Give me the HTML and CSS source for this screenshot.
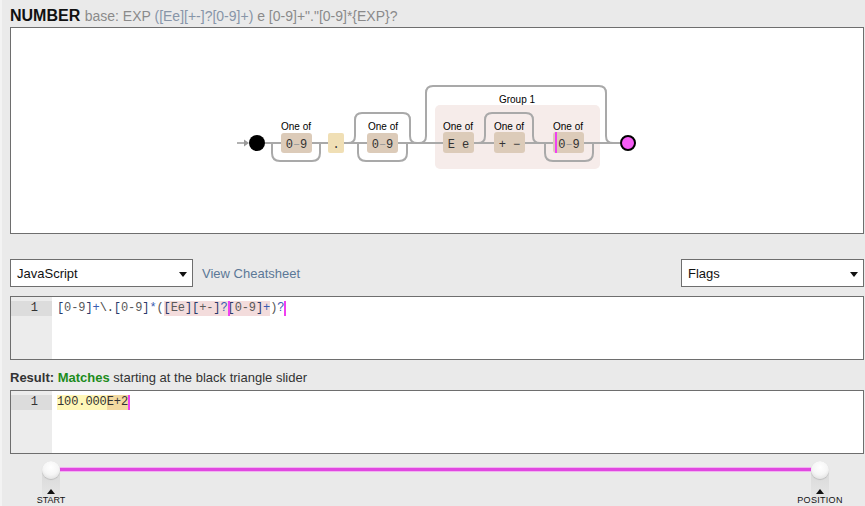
FILE: index.html
```html
<!DOCTYPE html>
<html>
<head>
<meta charset="utf-8">
<link rel="stylesheet" href="styles.css">
</head>
<body>
<div class="page">
  <div class="title"><span class="name">NUMBER</span> <span class="base">base: EXP <span class="grp">([Ee][+-]?[0-9]+)</span> e [0-9]+"."[0-9]*{EXP}?</span></div>

  <div class="diagram">
    <svg width="852" height="205" viewBox="0 0 852 205">
      <g transform="translate(-11,-28)">
        <rect x="435" y="105" width="165" height="64" rx="5" fill="#f6ecea"/>
        <text x="517" y="103" class="lbl" text-anchor="middle">Group 1</text>
        <g fill="none" stroke="#a9a9a9" stroke-width="2">
          <path d="M265,143 H620"/>
          <path d="M272,143 v10 q0 8 8 8 h32 q8 0 8 -8 v-10"/>
          <path d="M358,143 v10 q0 8 8 8 h33 q8 0 8 -8 v-10"/>
          <path d="M545,143 v10 q0 8 8 8 h32 q8 0 8 -8 v-10"/>
          <path d="M348,143 q7 0 7 -7 v-16 q0 -7 7 -7 h41 q7 0 7 7 v16 q0 7 7 7"/>
          <path d="M419,143 q7 0 7 -7 v-43 q0 -7 7 -7 h166 q7 0 7 7 v43 q0 7 7 7"/>
          <path d="M478,143 q7 0 7 -7 v-16 q0 -7 7 -7 h34 q7 0 7 7 v16 q0 7 7 7"/>
        </g>
        <path d="M237,143 H247" stroke="#999" stroke-width="1.5"/>
        <path d="M244,139.5 L249,143 L244,146.5 Z" fill="#999"/>
        <circle cx="257" cy="143" r="8" fill="#000"/>

        <text x="296" y="130" class="lbl" text-anchor="middle">One of</text>
        <rect x="281" y="133" width="31" height="20" rx="3" fill="#dccbb9"/>
        <text x="296.5" y="147.5" class="mono" text-anchor="middle">0<tspan fill="#999">–</tspan>9</text>

        <rect x="328" y="133" width="16" height="20" rx="2" fill="#f0dfb5"/>
        <text x="336" y="147.5" class="mono" text-anchor="middle">.</text>

        <text x="383" y="130" class="lbl" text-anchor="middle">One of</text>
        <rect x="367" y="133" width="31" height="20" rx="3" fill="#dccbb9"/>
        <text x="382.5" y="147.5" class="mono" text-anchor="middle">0<tspan fill="#999">–</tspan>9</text>

        <text x="458" y="130" class="lbl" text-anchor="middle">One of</text>
        <rect x="443" y="132" width="31" height="21" rx="3" fill="#dccbb9"/>
        <text x="458.5" y="147.5" class="mono" text-anchor="middle" xml:space="preserve">E e</text>

        <text x="509" y="130" class="lbl" text-anchor="middle">One of</text>
        <rect x="494" y="132" width="31" height="21" rx="3" fill="#dccbb9"/>
        <text x="509.5" y="147.5" class="mono" text-anchor="middle" xml:space="preserve">+ −</text>

        <text x="568" y="130" class="lbl" text-anchor="middle">One of</text>
        <rect x="553" y="132" width="31" height="21" rx="3" fill="#dccbb9"/>
        <rect x="555" y="132" width="2" height="21" fill="#f040f0"/>
        <text x="569" y="147.5" class="mono" text-anchor="middle">0<tspan fill="#999">–</tspan>9</text>

        <circle cx="628" cy="143" r="7" fill="#f45cf4" stroke="#000" stroke-width="2"/>
      </g>
    </svg>
  </div>

  <div class="toolbar">
    <div class="left">
      <div class="select sel-js"><span>JavaScript</span><i class="caret"></i></div>
      <a class="cheat">View Cheatsheet</a>
    </div>
    <div class="select sel-flags"><span>Flags</span><i class="caret"></i></div>
  </div>

  <div class="editor">
    <div class="gutter"><div class="ln">1</div></div>
    <div class="code"><span class="br">[</span><span class="rg">0-9</span><span class="br">]</span><span class="q">+</span><span class="esc">\.</span><span class="br">[</span><span class="rg">0-9</span><span class="br">]</span><span class="q">*</span><span class="par">(</span><span class="hl"><span class="br">[</span><span class="rg">Ee</span><span class="br">]</span><span class="br">[</span><span class="rg">+-</span><span class="br">]</span><span class="q">?</span><span class="cur"></span><span class="br">[</span><span class="rg">0-9</span><span class="br">]</span><span class="q">+</span></span><span class="par">)</span><span class="q">?</span><span class="cur"></span></div>
  </div>

  <div class="result"><b>Result:</b> <b class="ok">Matches</b> starting at the black triangle slider</div>

  <div class="editor">
    <div class="gutter"><div class="ln">1</div></div>
    <div class="code"><span class="dot"></span><span class="m1">100.000</span><span class="m2">E+2</span><span class="cur"></span></div>
  </div>

  <div class="slider">
    <div class="track"></div>
    <div class="handle h-start"><div class="knob"></div><div class="tri"></div><div class="hlabel">START</div></div>
    <div class="handle h-pos"><div class="knob"></div><div class="tri"></div><div class="hlabel pos">POSITION</div></div>
  </div>
</div>
</body>
</html>
```

FILE: styles.css
```css
html, body {
  margin: 0;
  padding: 0;
  background: #eaeaea;
}
body {
  font-family: "Liberation Sans", Arial, sans-serif;
  color: #222;
}
.page {
  width: 855px;
  height: 506px;
  padding: 6px 0 0 8px;
  border-left: 2px solid #f3f3f3;
  overflow: hidden;
}
.title {
  height: 21px;
  line-height: 20px;
  white-space: nowrap;
}
.name {
  font-size: 16px;
  font-weight: bold;
  color: #111;
}
.base {
  font-size: 14px;
  color: #8a8a8a;
}
.grp {
  color: #8795a8;
}
.diagram {
  width: 852px;
  height: 205px;
  border: 1px solid #6e6e6e;
  background: #fff;
}
.diagram svg {
  display: block;
}
.lbl {
  font-family: "Liberation Sans", Arial, sans-serif;
  font-size: 10px;
  fill: #000;
}
.mono {
  font-family: "Liberation Mono", "Courier New", monospace;
  font-size: 12px;
  fill: #333;
}
.toolbar {
  margin-top: 25px;
  height: 28px;
  display: flex;
  justify-content: space-between;
  width: 854px;
}
.left {
  display: flex;
  align-items: center;
  gap: 9px;
}
.select {
  box-sizing: border-box;
  width: 183px;
  height: 28px;
  border: 1px solid #6e6e6e;
  background: #fff;
  display: flex;
  align-items: center;
  justify-content: space-between;
  padding: 0 5px 0 6px;
  font-size: 13px;
  color: #111;
}
.caret {
  width: 0;
  height: 0;
  border-left: 4px solid transparent;
  border-right: 4px solid transparent;
  border-top: 5px solid #111;
  margin-top: 2px;
}
.cheat {
  font-size: 13px;
  color: #5b7897;
}
.editor {
  margin-top: 9px;
  box-sizing: border-box;
  width: 854px;
  height: 64px;
  border: 1px solid #6e6e6e;
  background: #fff;
  display: flex;
}
.gutter {
  width: 41px;
  background: #ececec;
  padding-top: 4px;
}
.ln {
  height: 15px;
  line-height: 15px;
  background: #dcdcdc;
  text-align: right;
  padding-right: 14px;
  font-family: "Liberation Mono", "Courier New", monospace;
  font-size: 12px;
  color: #333;
}
.code {
  padding: 4px 0 0 5px;
  height: 15px;
  line-height: 15px;
  font-family: "Liberation Mono", "Courier New", monospace;
  font-size: 12px;
  letter-spacing: -0.1px;
  color: #333;
  white-space: pre;
  display: flex;
  align-items: stretch;
}
.br { color: #2b3a6b; }
.rg { color: #5a5a5a; }
.q { color: #3a5bb0; }
.esc { color: #444; }
.par { color: #555; }
.hl {
  background: #f3dcdc;
  display: flex;
}
.cur {
  display: inline-block;
  width: 0;
  border-left: 2px solid #f040f0;
  margin-right: -2px;
  position: relative;
}
.result {
  margin-top: 10px;
  height: 16px;
  line-height: 16px;
  font-size: 13px;
  color: #333;
}
.result + .editor {
  margin-top: 4px;
}
.ok {
  color: #1c8c1c;
}
.dot {
  display: inline-block;
  width: 0;
  border-left: 1px dotted #222;
  margin-right: -1px;
}
.m1 { background: #fff7b8; }
.m2 { background: #f2d9a0; }
.slider {
  position: relative;
  width: 854px;
  height: 52px;
}
.track {
  position: absolute;
  left: 41px;
  top: 14px;
  width: 769px;
  height: 3px;
  background: #e048e0;
  box-shadow: 0 -1px 0 #f2b0f2, 0 1px 0 #f2b0f2;
}
.handle {
  position: absolute;
  top: 7px;
  width: 18px;
  height: 45px;
  background: linear-gradient(to bottom, #d6d6d6 0%, #dedede 45%, rgba(234,234,234,0) 100%);
  border-radius: 9px 9px 0 0;
}
.h-start { left: 32px; }
.h-pos { left: 801px; }
.knob {
  position: absolute;
  left: 0;
  top: 0;
  width: 18px;
  height: 18px;
  border-radius: 50%;
  background: radial-gradient(circle at 50% 35%, #ffffff 0%, #f6f6f6 50%, #d6d6d6 100%);
  box-shadow: 0 1px 1px rgba(0,0,0,0.15);
}
.tri {
  position: absolute;
  left: 5px;
  top: 28px;
  width: 0;
  height: 0;
  border-left: 4px solid transparent;
  border-right: 4px solid transparent;
  border-bottom: 5px solid #111;
}
.hlabel {
  position: absolute;
  top: 34px;
  left: 50%;
  transform: translateX(-50%);
  font-size: 9px;
  line-height: 10px;
  color: #111;
  white-space: nowrap;
}
.hlabel.pos {
  letter-spacing: 0.3px;
}
```
